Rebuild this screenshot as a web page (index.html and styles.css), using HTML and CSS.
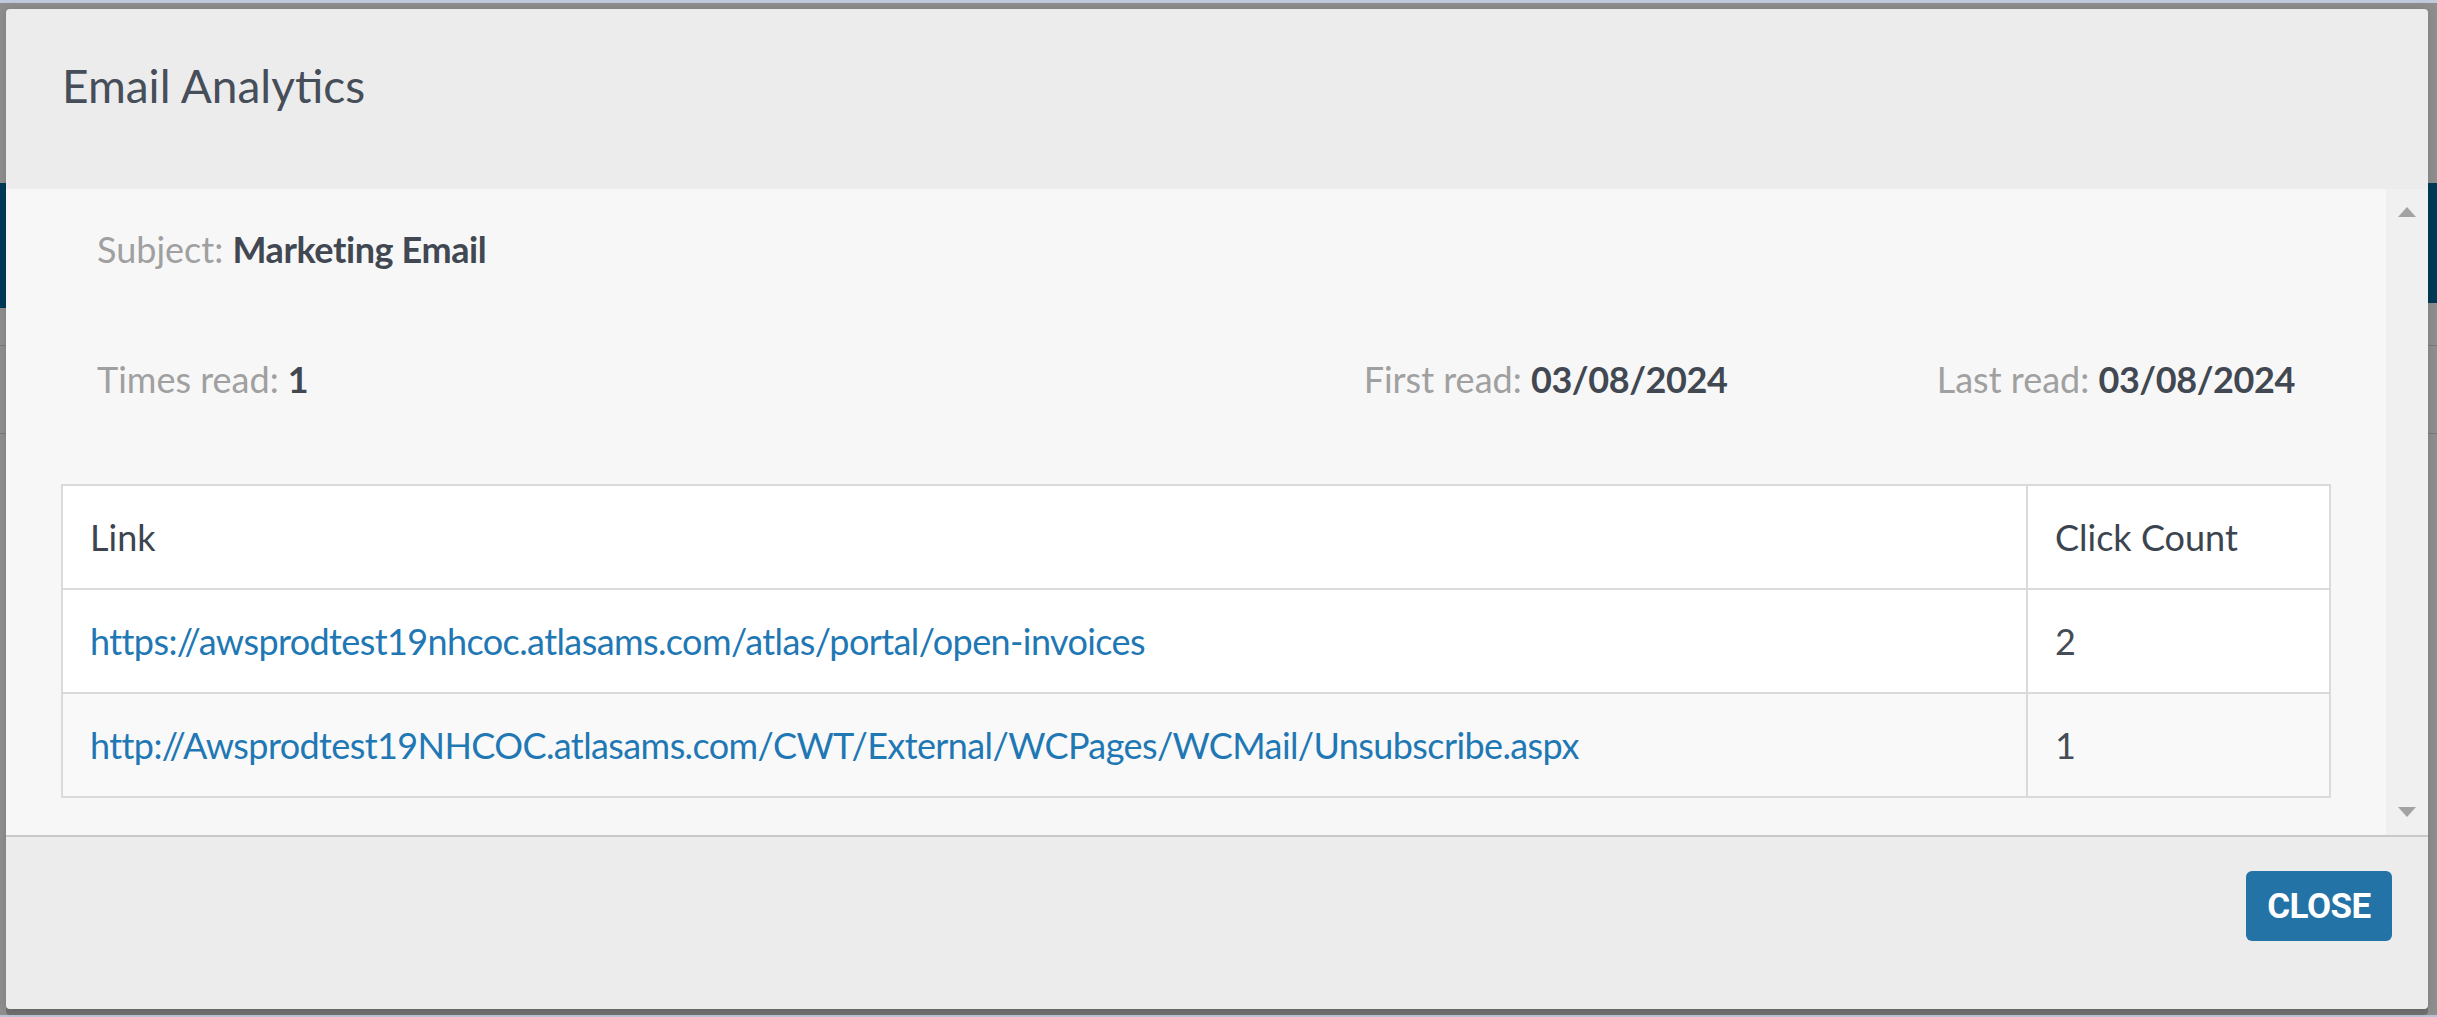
FILE: index.html
```html
<!DOCTYPE html>
<html lang="en">
<head>
    <meta charset="UTF-8">
    <meta name="viewport" content="width=device-width, initial-scale=1.0">
    <title>Email Analytics</title>
    <link rel="stylesheet" href="styles.css">
</head>
<body>
    <!-- page under the dimmed backdrop -->
    <div class="page-behind">
        <div class="behind-strip behind-strip-top"></div>
        <div class="behind-band behind-band-left"></div>
        <div class="behind-band behind-band-right"></div>
        <div class="behind-line behind-line-one"></div>
        <div class="behind-line behind-line-two"></div>
        <div class="behind-strip behind-strip-bottom"></div>
    </div>

    <div class="modal">
        <div class="modal-header">
            <h4 class="modal-title">Email Analytics</h4>
        </div>

        <div class="modal-body">
            <div class="modal-scroll">
                <div class="info-row">
                    <div class="info-col info-col-full">
                        <span class="info-label">Subject:</span> <b class="info-value">Marketing Email</b>
                    </div>
                </div>

                <div class="info-row info-row-reads">
                    <div class="info-col">
                        <span class="info-label">Times read:</span> <b class="info-value">1</b>
                    </div>
                    <div class="info-col info-col-right">
                        <span class="info-label">First read:</span> <b class="info-value">03/08/2024</b>
                    </div>
                    <div class="info-col info-col-right">
                        <span class="info-label">Last read:</span> <b class="info-value">03/08/2024</b>
                    </div>
                </div>

                <table class="link-table">
                    <thead>
                        <tr>
                            <th>Link</th>
                            <th class="count-col">Click Count</th>
                        </tr>
                    </thead>
                    <tbody>
                        <tr>
                            <td><a class="table-link" href="#">https://awsprodtest19nhcoc.atlasams.com/atlas/portal/open-invoices</a></td>
                            <td>2</td>
                        </tr>
                        <tr>
                            <td><a class="table-link" href="#">http://Awsprodtest19NHCOC.atlasams.com/CWT/External/WCPages/WCMail/Unsubscribe.aspx</a></td>
                            <td>1</td>
                        </tr>
                    </tbody>
                </table>
            </div>

            <div class="scrollbar">
                <span class="scroll-arrow scroll-arrow-up"></span>
                <span class="scroll-arrow scroll-arrow-down"></span>
            </div>
        </div>

        <div class="modal-footer">
            <button class="close-button">CLOSE</button>
        </div>
    </div>
</body>
</html>
```

FILE: styles.css
```css
html, body {
    margin: 0;
    padding: 0;
    width: 2437px;
    height: 1017px;
    overflow: hidden;
}

body {
    background: #8e8e8e;
    font-family: 'Lato', 'Open Sans', sans-serif;
    position: relative;
}

/* bits of the page showing round the modal */
.page-behind {
    position: absolute;
    inset: 0;
}

.behind-strip {
    position: absolute;
    left: 0;
    right: 0;
    background: #c1c9dd;
}

.behind-strip-top {
    top: 0;
    height: 3px;
}

.behind-strip-bottom {
    bottom: 0;
    height: 2px;
    background: #b9c2d5;
}

.behind-band {
    position: absolute;
    top: 183px;
    background: #003a57;
}

.behind-band-left {
    left: 0;
    width: 6px;
    height: 125px;
}

.behind-band-right {
    right: 0;
    width: 9px;
    height: 120px;
}

.behind-line {
    position: absolute;
    left: 0;
    right: 0;
    height: 1px;
    background: #7a7a7a;
}

.behind-line-one {
    top: 345px;
}

.behind-line-two {
    top: 433px;
}

.modal {
    position: absolute;
    top: 9px;
    left: 6px;
    width: 2422px;
    height: 1000px;
    border-radius: 4px;
    overflow: hidden;
    display: flex;
    flex-direction: column;
    box-shadow: 0 6px 0 rgba(0, 0, 0, 0.22), 0 0 10px rgba(0, 0, 0, 0.12);
}

.modal-header {
    height: 180px;
    box-sizing: border-box;
    padding: 50px 56px 0;
    background: #ececec;
    flex-shrink: 0;
}

.modal-title {
    margin: 0;
    font-size: 46px;
    font-weight: normal;
    line-height: 54px;
    color: #464e59;
}

.modal-body {
    height: 646px;
    display: flex;
    background: #f7f7f7;
    flex-shrink: 0;
}

.modal-scroll {
    flex: 1;
    padding: 38px 55px 0;
}

.info-row {
    display: grid;
    grid-template-columns: 2fr 1fr 1fr;
    font-size: 36px;
    line-height: 44px;
}

.info-row-reads {
    margin-top: 86px;
}

.info-col {
    padding: 0 36px;
    white-space: nowrap;
}

.info-col-full {
    grid-column: 1 / -1;
}

.info-col-right {
    text-align: right;
}

.info-label {
    color: #a0a0a0;
}

.info-value {
    color: #414852;
    font-weight: bold;
    letter-spacing: -0.4px;
}

.link-table {
    width: 100%;
    margin-top: 83px;
    border-collapse: collapse;
    border: 2px solid #dadada;
    background: white;
    font-size: 36px;
    line-height: 44px;
    color: #454c56;
}

.link-table th,
.link-table td {
    border: 2px solid #dadada;
    padding: 29px 27px;
    text-align: left;
    white-space: nowrap;
}

.link-table th {
    font-weight: normal;
    color: #3c4450;
}

.link-table .count-col {
    width: 247px;
}

.link-table tbody tr:nth-child(2) {
    background: #f9f9f9;
}

.table-link {
    color: #1f78b4;
    text-decoration: none;
    letter-spacing: -0.6px;
}

.scrollbar {
    width: 42px;
    background: #f0f0f0;
    display: flex;
    flex-direction: column;
    justify-content: space-between;
    align-items: center;
    padding: 18px 0;
    box-sizing: border-box;
}

.scroll-arrow {
    width: 0;
    height: 0;
    border-left: 9px solid transparent;
    border-right: 9px solid transparent;
}

.scroll-arrow-up {
    border-bottom: 10px solid #a3a3a3;
}

.scroll-arrow-down {
    border-top: 10px solid #a3a3a3;
}

.modal-footer {
    flex: 1;
    display: flex;
    justify-content: flex-end;
    align-items: flex-start;
    padding: 34px 36px 0;
    background: #ececec;
    border-top: 2px solid #c9c9c9;
}

.close-button {
    width: 146px;
    height: 70px;
    padding: 0;
    border: none;
    border-radius: 6px;
    background: #2473a6;
    color: white;
    font-family: 'Roboto', 'Liberation Sans', sans-serif;
    font-weight: bold;
    font-size: 35px;
    letter-spacing: -0.5px;
    cursor: pointer;
}
```
